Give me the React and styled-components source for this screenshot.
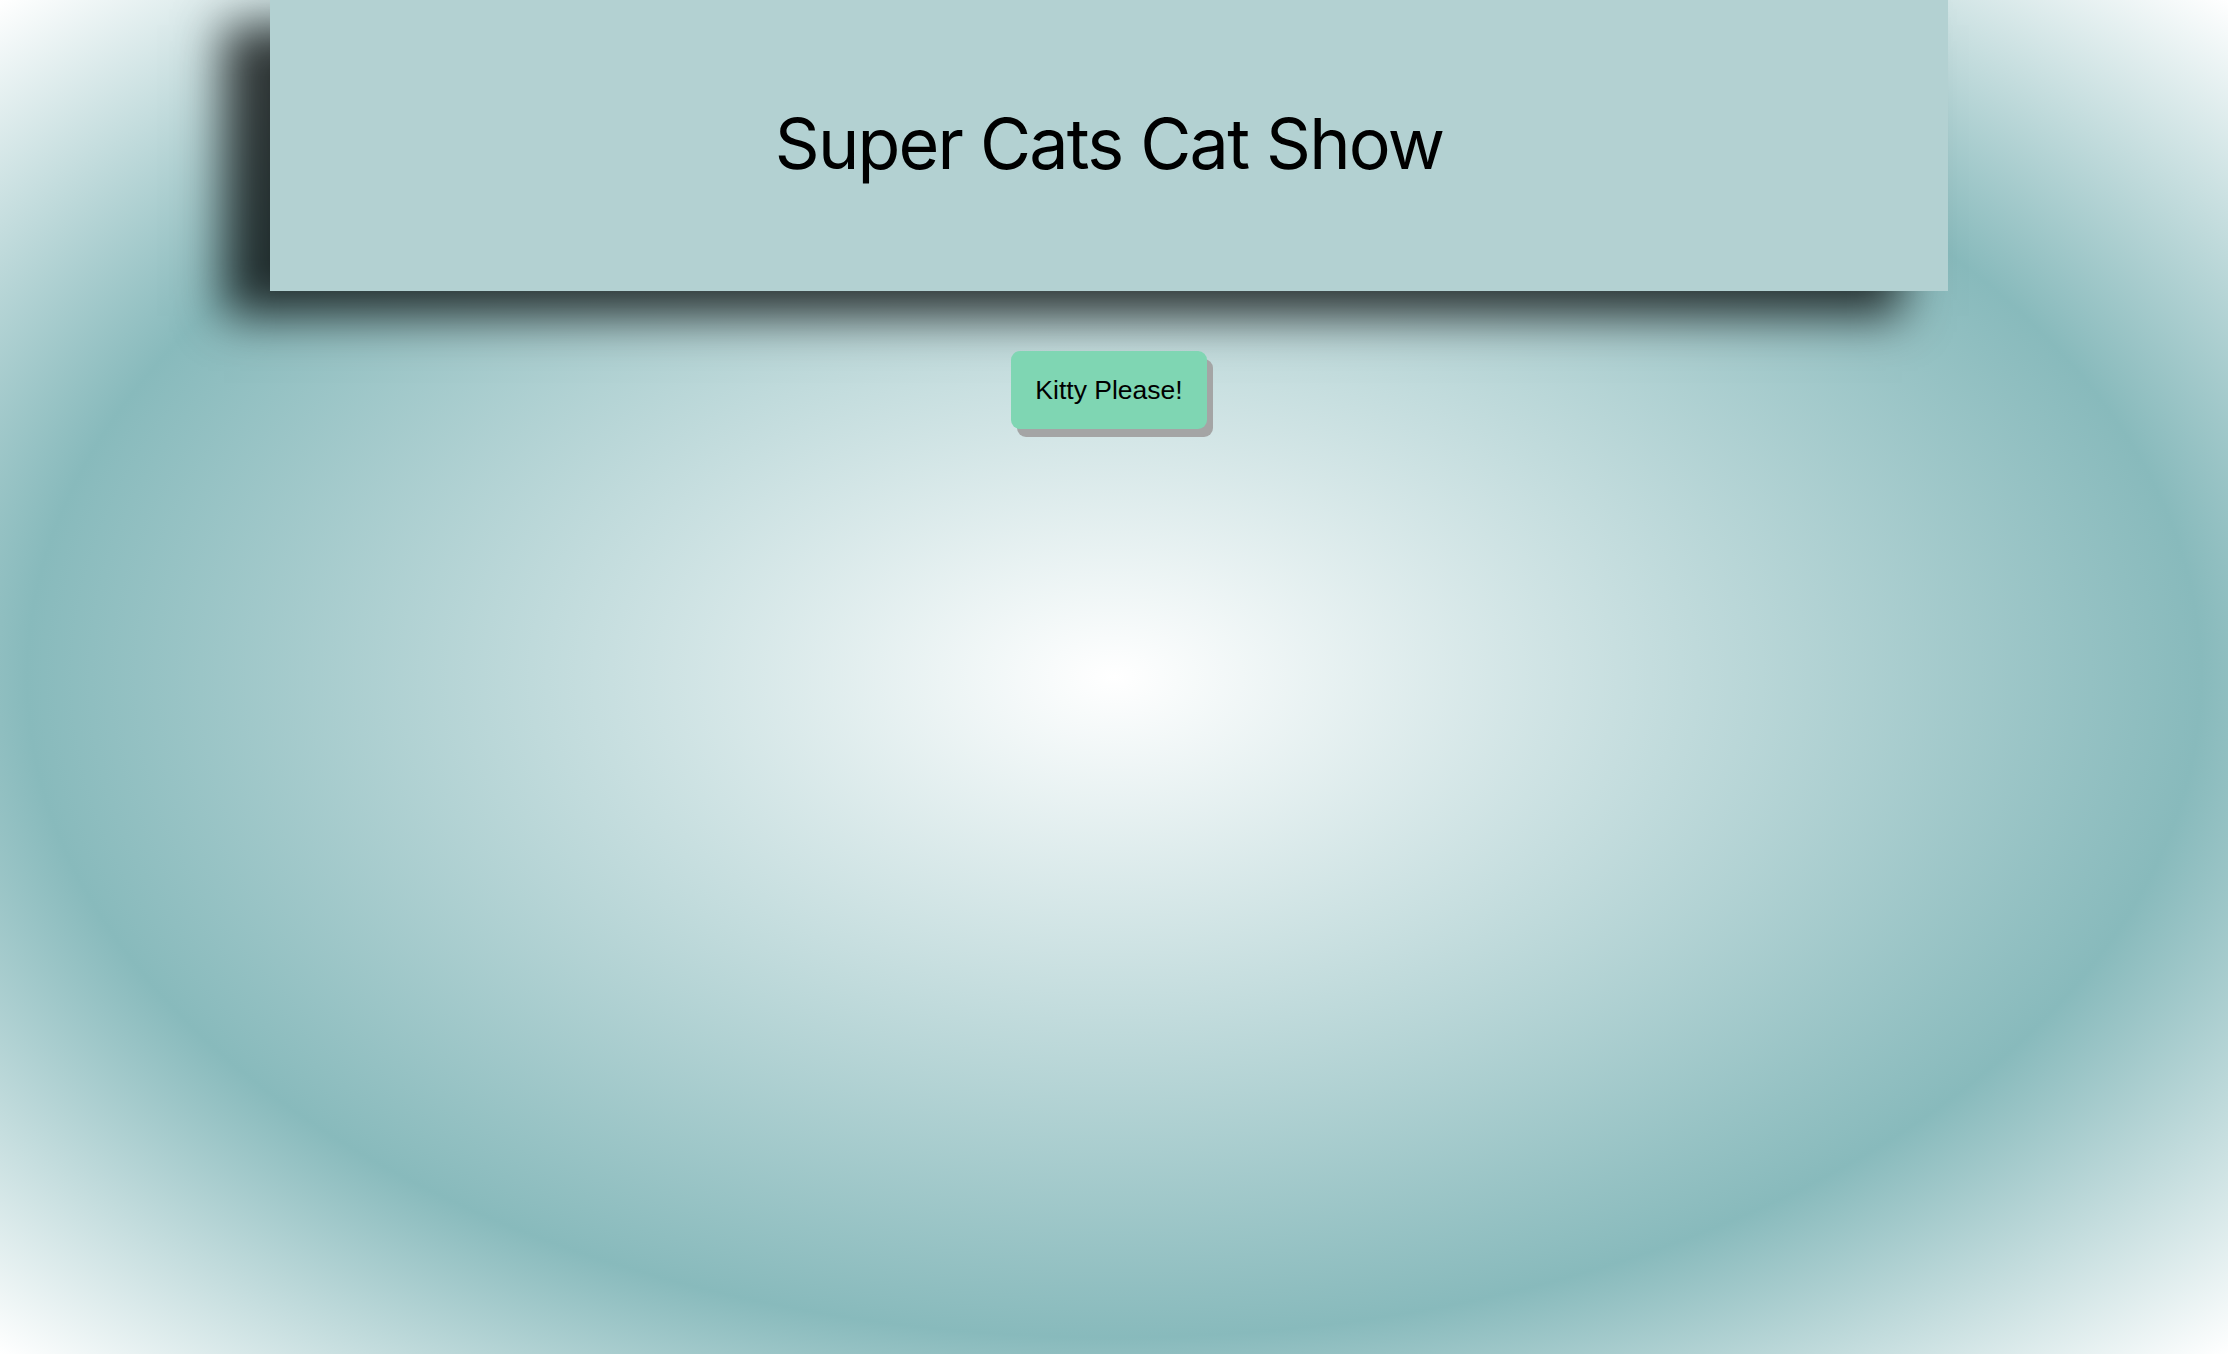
import React from 'react';
import styled, { createGlobalStyle } from 'styled-components';

const COLOURS = {
  teal: '#88babc',
  header: '#b3d1d2',
  button: '#7fd6b3',
  buttonShadow: '#a4a5a5',
};

const GlobalStyle = createGlobalStyle`
  html, body {
    margin: 0;
    padding: 0;
    height: 100%;
  }
  body {
    font-family: 'Liberation Sans', Arial, sans-serif;
  }
`;

const SPage = styled.div`
  min-height: 100vh;
  box-sizing: border-box;
  padding-right: 10px;
  display: flex;
  flex-direction: column;
  align-items: center;
  background: radial-gradient(
    ellipse at center,
    #ffffff 0%,
    ${COLOURS.teal} 69%,
    #ffffff 100%
  );
`;

const SHeader = styled.header`
  width: 1678px;
  height: 291px;
  background: ${COLOURS.header};
  box-shadow: -46px 25px 45px rgba(0, 0, 0, 0.76);
  display: flex;
  align-items: center;
  justify-content: center;
`;

const STitle = styled.h1`
  margin: 0 0 4px;
  font-family: Inter, 'Noto Sans', sans-serif;
  font-weight: 400;
  font-size: 70px;
  letter-spacing: -1.8px;
  color: #000;
`;

const SButton = styled.button`
  margin-top: 60px;
  width: 196px;
  height: 78px;
  border: none;
  border-radius: 9px;
  background: ${COLOURS.button};
  box-shadow: 6px 8px 0 ${COLOURS.buttonShadow};
  font-family: 'Liberation Sans', Arial, sans-serif;
  font-size: 26.5px;
  color: #000;
  cursor: pointer;
`;

const App = () => {
  return (
    <>
      <GlobalStyle />
      <SPage>
        <SHeader>
          <STitle>Super Cats Cat Show</STitle>
        </SHeader>
        <SButton type="button">Kitty Please!</SButton>
      </SPage>
    </>
  );
};

export default App;
